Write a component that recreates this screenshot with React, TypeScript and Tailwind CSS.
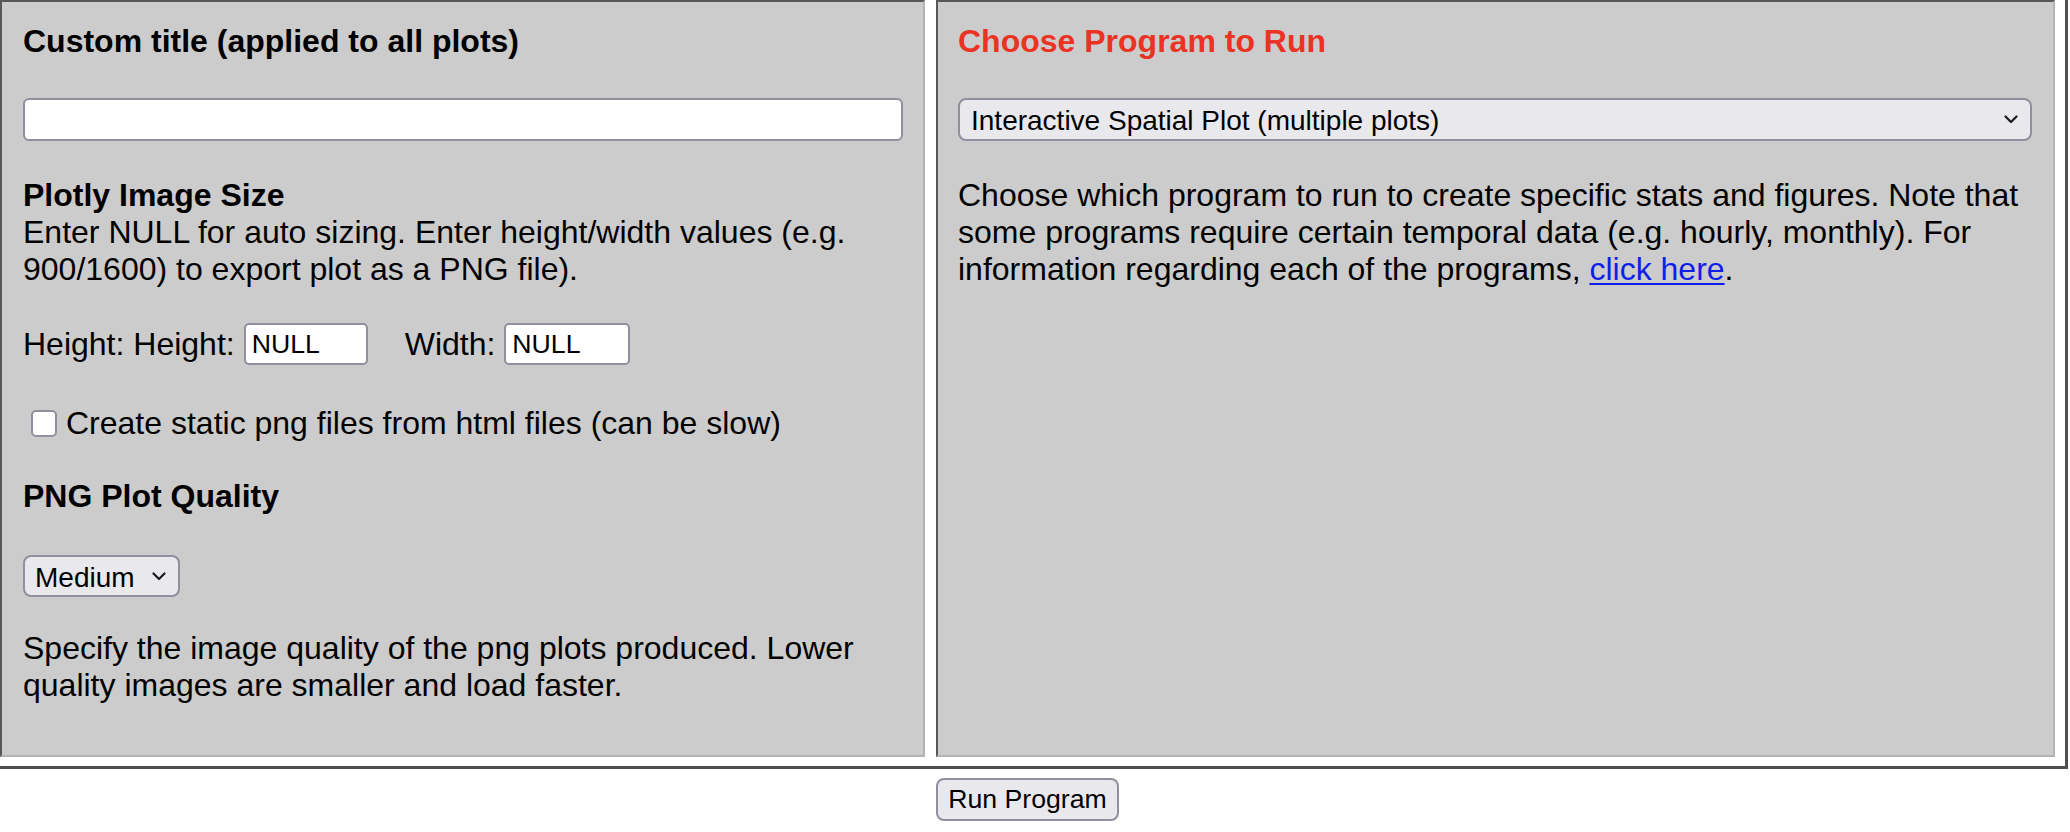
import React from "react";

const Chevron = ({ className }: { className: string }) => (
  <svg className={className} width="14" height="9" viewBox="0 0 14 9" fill="none">
    <path d="M1.5 1.5 L7 7 L12.5 1.5" stroke="#1a1a1a" strokeWidth="2.2" strokeLinecap="round" strokeLinejoin="round" />
  </svg>
);

export default function App() {
  return (
    <div className="bg-white w-[2070px] h-[832px] text-black [font-family:'Liberation_Sans',Arial,sans-serif]">
      <div className="w-[2068px] flex gap-[11px] pr-[10px] pb-[9px] border-r-[3px] border-b-[3px] border-[#4f4f4f]">
        {/* Left panel */}
        <div className="w-[925px] h-[757px] bg-[#cccccc] border-2 border-t-[#575757] border-l-[#575757] border-r-[#b3b3b3] border-b-[#b3b3b3] pl-[21px] pr-[20px] pt-[21px] flex flex-col">
          <div className="text-[32px] leading-[37px] font-bold">Custom title (applied to all plots)</div>
          <input
            type="text"
            className="mt-[38px] h-[43px] w-full bg-white border-2 border-[#8f8f9d] rounded-[6px] px-[6px] text-[26.67px] outline-none"
          />
          <div className="mt-[36px] text-[32px] leading-[37px] font-bold">Plotly Image Size</div>
          <div className="text-[32px] leading-[37px]">
            Enter NULL for auto sizing. Enter height/width values (e.g. 900/1600) to export plot as a PNG file).
          </div>
          <div className="mt-[35px] h-[42px] flex items-center text-[32px] leading-[37px]">
            <span>Height: Height:</span>
            <input
              type="text"
              defaultValue="NULL"
              className="ml-[9px] w-[124px] h-[42px] bg-white border-2 border-[#8f8f9d] rounded-[5px] px-[6px] text-[26.67px] outline-none"
            />
            <span className="ml-[37px]">Width:</span>
            <input
              type="text"
              defaultValue="NULL"
              className="ml-[9px] w-[126px] h-[42px] bg-white border-2 border-[#8f8f9d] rounded-[5px] px-[6px] text-[26.67px] outline-none"
            />
          </div>
          <div className="mt-[40px] h-[37px] flex items-center text-[32px] leading-[37px]">
            <input
              type="checkbox"
              className="ml-[8px] appearance-none w-[26px] h-[27px] bg-white border-2 border-[#8f8f9d] rounded-[5px]"
            />
            <span className="ml-[9px]">Create static png files from html files (can be slow)</span>
          </div>
          <div className="mt-[36px] text-[32px] leading-[37px] font-bold">PNG Plot Quality</div>
          <div className="mt-[40px] relative w-[157px] h-[42px]">
            <select
              defaultValue="Medium"
              className="appearance-none w-full h-full bg-[#e9e9ed] border-2 border-[#8f8f9d] rounded-[8px] pl-[10px] text-[28px] outline-none"
            >
              <option>High</option>
              <option>Medium</option>
              <option>Low</option>
            </select>
            <Chevron className="absolute right-[14px] top-[17px] pointer-events-none" />
          </div>
          <div className="mt-[33px] text-[32px] leading-[37px]">
            Specify the image quality of the png plots produced. Lower quality images are smaller and load faster.
          </div>
        </div>

        {/* Right panel */}
        <div className="w-[1119px] h-[757px] bg-[#cccccc] border-2 border-t-[#575757] border-l-[#575757] border-r-[#b3b3b3] border-b-[#b3b3b3] pl-[20px] pr-[21px] pt-[21px] flex flex-col">
          <div className="text-[32px] leading-[37px] font-bold text-[#ea3323]">Choose Program to Run</div>
          <div className="mt-[38px] relative w-full h-[43px]">
            <select
              defaultValue="Interactive Spatial Plot (multiple plots)"
              className="appearance-none w-full h-full bg-[#e9e9ed] border-2 border-[#8f8f9d] rounded-[8px] pl-[11px] text-[28px] outline-none"
            >
              <option>Interactive Spatial Plot (multiple plots)</option>
              <option>Interactive Spatial Plot (single plot)</option>
            </select>
            <Chevron className="absolute right-[14px] top-[17px] pointer-events-none" />
          </div>
          <p className="mt-[36px] text-[32px] leading-[37px]">
            Choose which program to run to create specific stats and figures. Note that some programs require certain
            temporal data (e.g. hourly, monthly). For information regarding each of the programs,{" "}
            <a href="#" className="text-[#0f1fe8] underline decoration-2 underline-offset-[3px]">
              click here
            </a>
            .
          </p>
        </div>
      </div>

      <div className="pl-[936px] mt-[9px]">
        <button
          type="button"
          className="h-[43px] w-[183px] bg-[#e9e9ed] border-2 border-[#8f8f9d] rounded-[8px] text-[26.67px] leading-none"
        >
          Run Program
        </button>
      </div>
    </div>
  );
}
